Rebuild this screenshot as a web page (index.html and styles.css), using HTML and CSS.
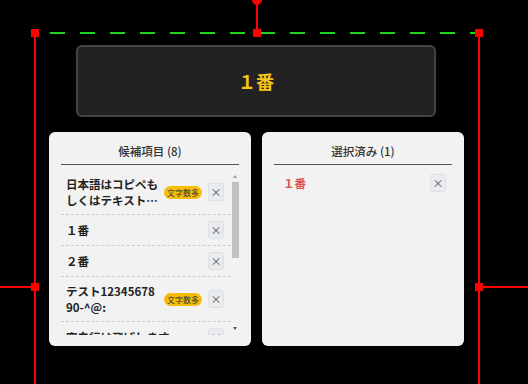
FILE: index.html
```html
<!DOCTYPE html>
<html lang="ja">
<head>
  <meta charset="UTF-8" />
  <meta name="viewport" content="width=device-width, initial-scale=1.0"/>
  <title>選択エディタ</title>
  <link rel="stylesheet" href="styles.css">
</head>
<body>

  <div class="frame">
    <!-- ハンドル類 (選択枠の上に重ねる) -->
    <span class="guide-top"></span>
    <span class="rotate-line"></span>
    <span class="rotate-dot"></span>
    <span class="side-line left"></span>
    <span class="side-line right"></span>
    <span class="handle tl"></span>
    <span class="handle tc"></span>
    <span class="handle tr"></span>
    <span class="handle ml"></span>
    <span class="handle mr"></span>

    <div class="display-box">
      <span>１番</span>
    </div>

    <div class="panels">
      <section class="panel">
        <h2 class="panel-title">候補項目 (8)</h2>
        <div class="scroll-wrap">
          <ul class="list">
            <li class="item">
              <span class="item-text">日本語はコピペもしくはテキストファイルから読み込めます</span>
              <span class="badge">文字数多</span>
              <button class="remove">×</button>
            </li>
            <li class="item">
              <span class="item-text">１番</span>
              <button class="remove">×</button>
            </li>
            <li class="item">
              <span class="item-text">２番</span>
              <button class="remove">×</button>
            </li>
            <li class="item">
              <span class="item-text">テスト1234567890-^@:</span>
              <span class="badge">文字数多</span>
              <button class="remove">×</button>
            </li>
            <li class="item">
              <span class="item-text">空白行は飛ばします</span>
              <button class="remove">×</button>
            </li>
            <li class="item">
              <span class="item-text">３番</span>
              <button class="remove">×</button>
            </li>
            <li class="item">
              <span class="item-text">４番</span>
              <button class="remove">×</button>
            </li>
            <li class="item">
              <span class="item-text">５番</span>
              <button class="remove">×</button>
            </li>
          </ul>
          <!-- スクロールバー (細身) -->
          <div class="scrollbar">
            <span class="sb-arrow up"></span>
            <div class="sb-track"><span class="sb-thumb"></span></div>
            <span class="sb-arrow down"></span>
          </div>
        </div>
      </section>

      <section class="panel">
        <h2 class="panel-title">選択済み (1)</h2>
        <ul class="list selected">
          <li class="item">
            <span class="item-text picked">１番</span>
            <button class="remove">×</button>
          </li>
        </ul>
      </section>
    </div>
  </div>

</body>
</html>
```

FILE: styles.css
```css
/* Base */
* {
  margin: 0;
  padding: 0;
  box-sizing: border-box;
  font-family: 'Noto Sans CJK JP', 'Noto Sans', sans-serif;
}
html, body {
  width: 100%;
  height: 100%;
  overflow: hidden;
  background: #000;
}

/* Selection frame */
.frame {
  position: relative;
  width: 446px;
  height: 508px;
  margin: 33px 0 0 34px;
  padding-top: 12px;
  border-left: 2px solid #f00;
  border-right: 2px solid #f00;
}
.guide-top {
  position: absolute;
  top: -1px;
  left: 14px;
  right: 3px;
  height: 2px;
  background: repeating-linear-gradient(90deg, #1ed21e 0 15px, transparent 15px 30px);
}
.rotate-line {
  position: absolute;
  top: -33px;
  left: 220px;
  width: 2px;
  height: 30px;
  background: #f00;
}
.rotate-dot {
  position: absolute;
  top: -38px;
  left: 216px;
  width: 10px;
  height: 10px;
  border-radius: 50%;
  background: #f00;
}
.side-line {
  position: absolute;
  top: 253px;
  height: 2px;
  background: #f00;
}
.side-line.left  { left: -36px; width: 34px; }
.side-line.right { left: 442px; width: 60px; }
.handle {
  position: absolute;
  width: 8px;
  height: 8px;
  background: #f00;
}
.handle.tl { top: -4px; left: -5px; }
.handle.tc { top: -4px; left: 217px; }
.handle.tr { top: -4px; left: 439px; }
.handle.ml { top: 250px; left: -5px; }
.handle.mr { top: 250px; left: 439px; }

/* Current value */
.display-box {
  width: 360px;
  height: 72px;
  margin-left: 40px;
  background: #222;
  border: 2px solid #444;
  border-radius: 6px;
  display: flex;
  align-items: center;
  justify-content: center;
}
.display-box span {
  color: #f5c518;
  font-size: 18px;
  font-weight: bold;
}

/* Panels */
.panels {
  display: grid;
  grid-template-columns: 202px 202px;
  gap: 11px;
  margin: 15px 0 0 13px;
}
.panel {
  height: 214px;
  background: #f2f2f2;
  border-radius: 6px;
  padding: 0 12px 11px;
  display: flex;
  flex-direction: column;
}
.panel-title {
  font-size: 11.5px;
  font-weight: 500;
  line-height: 16px;
  color: #333;
  text-align: center;
  padding: 11px 0 5px;
  border-bottom: 1px solid #555;
}
.scroll-wrap {
  flex: 1;
  min-height: 0;
  margin-top: 5px;
  display: flex;
}
.list {
  list-style: none;
  flex: 1;
  min-width: 0;
  overflow: hidden;
}

/* Scrollbar */
.scrollbar {
  width: 8px;
  display: flex;
  flex-direction: column;
  align-items: center;
}
.sb-arrow {
  height: 11px;
  width: 8px;
  display: flex;
  justify-content: center;
}
.sb-arrow::before {
  content: "";
  width: 0;
  height: 0;
  border-left: 2px solid transparent;
  border-right: 2px solid transparent;
}
.sb-arrow.up { align-items: flex-end; padding-bottom: 3px; }
.sb-arrow.up::before { border-bottom: 3px solid #999; }
.sb-arrow.down { align-items: flex-start; padding-top: 3px; }
.sb-arrow.down::before { border-top: 3px solid #555; }
.sb-track {
  flex: 1;
  width: 100%;
  padding-top: 1px;
}
.sb-thumb {
  display: block;
  width: 7px;
  height: 76px;
  margin-left: 1px;
  background: #c1c1c1;
}

/* Rows */
.item {
  display: flex;
  align-items: center;
  padding: 6px 7px 6px 5px;
  border-bottom: 1px dashed #ccc;
}
.selected .item {
  border-bottom: none;
  padding: 9px 6px 6px 9px;
}
.item-text {
  flex: 1;
  min-width: 0;
  margin-right: 4px;
  font-size: 11.5px;
  font-weight: bold;
  line-height: 16px;
  color: #222;
  word-break: break-all;
  display: -webkit-box;
  -webkit-box-orient: vertical;
  -webkit-line-clamp: 2;
  overflow: hidden;
}
.item-text.picked {
  color: #d9534f;
}
.badge {
  flex: none;
  width: 38px;
  text-align: center;
  background: #f7bd0b;
  color: #333;
  font-size: 8px;
  line-height: 13px;
  border-radius: 7px;
  margin-right: 6px;
}
.remove {
  flex: none;
  width: 16px;
  height: 18px;
  border: 1px solid #dcdfe4;
  border-radius: 3px;
  background: #e9ecef;
  color: #555;
  font-size: 11px;
  line-height: 15px;
  cursor: pointer;
}
```
